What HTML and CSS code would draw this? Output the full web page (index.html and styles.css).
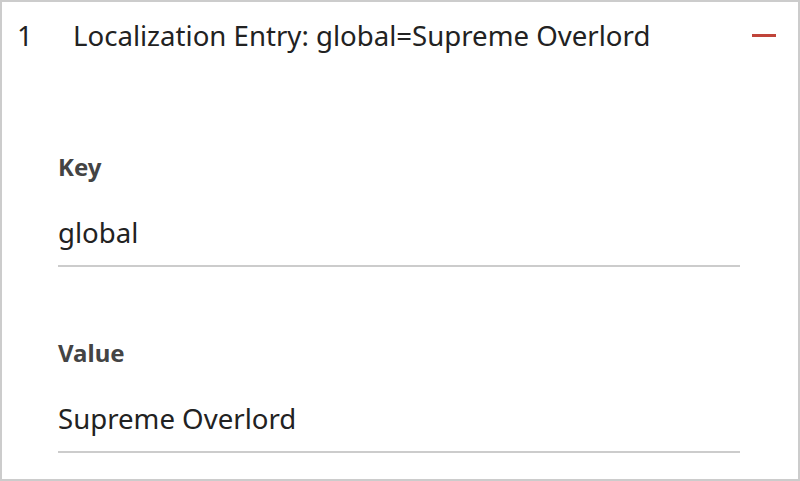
FILE: index.html
```html
<!DOCTYPE html>
<html>
<head>
<meta charset="utf-8">
<link rel="stylesheet" href="styles.css">
</head>
<body>
<div class="panel">
  <div class="header">
    <span class="index">1</span>
    <span class="title">Localization Entry: global=Supreme Overlord</span>
    <span class="remove" aria-label="Remove"></span>
  </div>
  <div class="fields">
    <div class="field">
      <div class="label">Key</div>
      <div class="input">global</div>
    </div>
    <div class="field">
      <div class="label">Value</div>
      <div class="input">Supreme Overlord</div>
    </div>
  </div>
</div>
</body>
</html>
```
FILE: styles.css
```css
html, body {
  margin: 0;
  padding: 0;
  background: #fff;
}
body {
  font-family: "Noto Sans", "Open Sans", sans-serif;
  color: #222;
}
.panel {
  box-sizing: border-box;
  width: 800px;
  height: 481px;
  border: 2px solid #ccc;
  overflow: hidden;
}
.header {
  display: flex;
  align-items: center;
  height: 66px;
  padding: 0 22px 0 15px;
  font-size: 27.6px;
}
.index {
  width: 56px;
}
.title {
  flex: 1;
}
.remove {
  width: 24px;
  height: 3px;
  background: #c0443a;
}
.fields {
  padding: 0 58px 0 56px;
}
.field {
  margin-top: 84px;
}
.field + .field {
  margin-top: 71px;
}
.label {
  font-size: 24px;
  font-weight: bold;
  color: #444;
  line-height: 30px;
}
.input {
  margin-top: 30px;
  font-size: 27.6px;
  line-height: 40px;
  padding-bottom: 13px;
  border-bottom: 2px solid #ccc;
}
```
